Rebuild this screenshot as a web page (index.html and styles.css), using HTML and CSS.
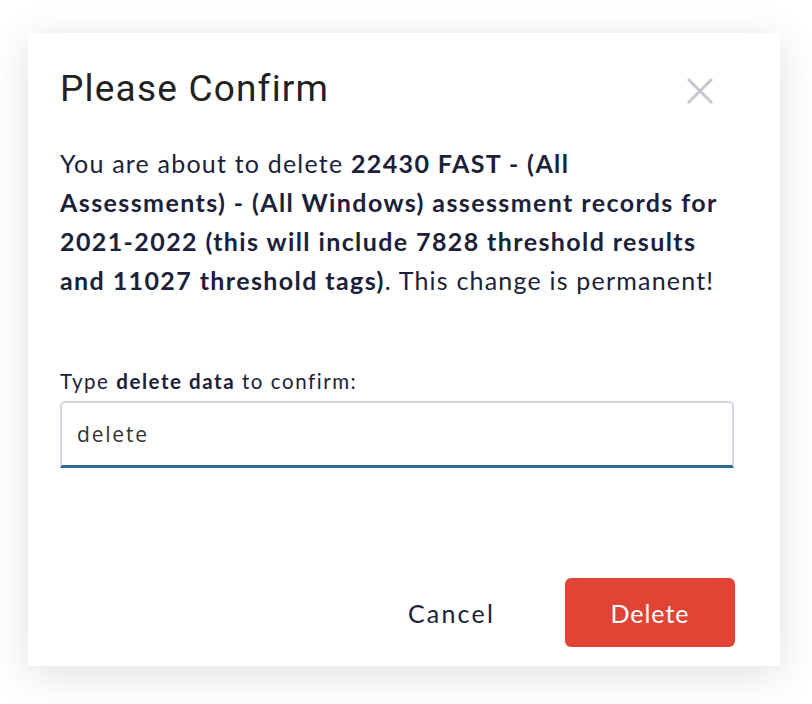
FILE: index.html
```html
<!DOCTYPE html>
<html>
<head>
<meta charset="utf-8">
<link rel="stylesheet" href="styles.css">
</head>
<body>
<div class="dialog">
  <div class="header">
    <h1 class="title">Please Confirm</h1>
    <button class="close" aria-label="Close">
      <svg width="28" height="28" viewBox="0 0 28 28"><path d="M2 2 L26 26 M26 2 L2 26" stroke="#c5c7d3" stroke-width="3" fill="none"/></svg>
    </button>
  </div>
  <p class="message">You are about to delete <b>22430 FAST - (All Assessments) - (All Windows) assessment records for 2021-2022 (this will include 7828 threshold results and 11027 threshold tags)</b>. This change is permanent!</p>
  <label class="label">Type <b>delete data</b> to confirm:</label>
  <div class="input">delete</div>
  <div class="footer">
    <button class="cancel">Cancel</button>
    <button class="delete">Delete</button>
  </div>
</div>
</body>
</html>
```
FILE: styles.css
```css
html, body { margin: 0; padding: 0; background: #ffffff; }
body { width: 812px; height: 704px; overflow: hidden; }
.dialog {
  box-sizing: border-box;
  margin: 33px 0 0 28px;
  width: 752px;
  height: 633px;
  background: #fff;
  box-shadow: 0 8px 40px rgba(0,0,0,0.13);
  padding: 0 32px;
  display: flex;
  flex-direction: column;
  font-family: Lato, "Open Sans", sans-serif;
  color: #1b2139;
}
.header { display: flex; justify-content: space-between; align-items: flex-start; padding-top: 34px; }
.title {
  margin: 0;
  font-family: Roboto, "Liberation Sans", sans-serif;
  font-weight: 400;
  font-size: 37px;
  line-height: 44px;
  color: #222;
  letter-spacing: 1.2px;
}
.close { border: 0; background: none; padding: 0; margin: 10px 34px 0 0; width: 28px; height: 28px; }
.message { margin: 33px 0 0; width: 663px; font-size: 25px; line-height: 39px; letter-spacing: 1.2px; }
.message b { font-weight: 700; letter-spacing: 1.4px; }
.label { margin-top: 69px; font-size: 20.5px; line-height: 24px; letter-spacing: 1.55px; }
.label b { font-weight: 700; }
.input {
  box-sizing: border-box;
  margin-top: 8px;
  width: 674px;
  height: 67px;
  border: 2px solid #d4d5de;
  border-bottom: 3px solid #2e6b94;
  border-radius: 5px 5px 0 0;
  padding: 0 0 0 15px;
  display: flex;
  align-items: center;
  font-family: "Open Sans", Lato, sans-serif;
  font-size: 21px;
  letter-spacing: 1.8px;
  color: #333;
}
.footer { margin-top: auto; margin-bottom: 19px; display: flex; justify-content: flex-end; align-items: center; }
.cancel {
  border: 0; background: none; font-family: Lato, sans-serif; font-size: 25px; color: #1b2139;
  padding: 0; margin-right: 70px; letter-spacing: 2.2px;
}
.delete {
  border: 0; background: #e04434; color: #fff; font-family: Lato, sans-serif; font-size: 25px;
  width: 170px; height: 69px; border-radius: 6px; margin-right: 13px; letter-spacing: 1px;
}
```
